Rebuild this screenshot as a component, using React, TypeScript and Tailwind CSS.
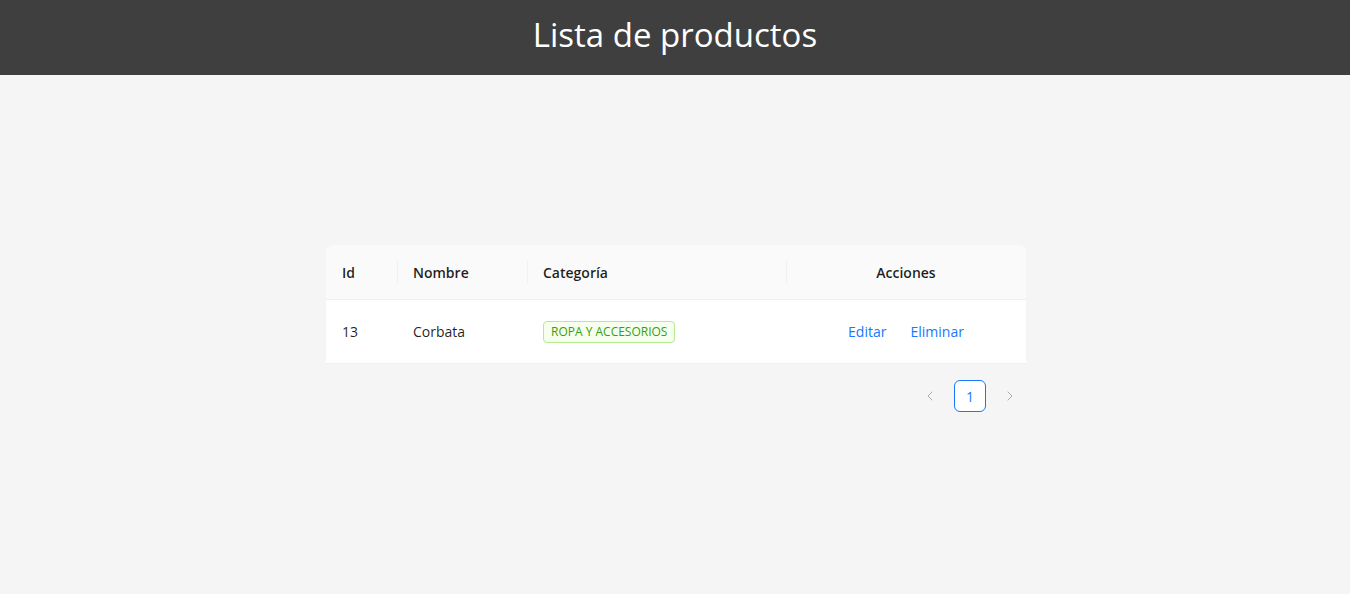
import { ChevronLeft, ChevronRight } from "lucide-react";

const font = { fontFamily: '"Open Sans", "Noto Sans", sans-serif' };

export default function App() {
  return (
    <div className="min-h-[594px] bg-[#f5f5f5] text-[14px] text-[rgba(0,0,0,0.88)]" style={font}>
      <header className="h-[75px] bg-[#3f3f3f] flex items-center justify-center">
        <h1 className="text-white text-[33px] leading-none pb-[6px]">Lista de productos</h1>
      </header>

      <main className="pt-[170px] flex justify-center pl-[2px]">
        <div className="w-[700px]">
          <table className="w-full border-separate border-spacing-0 bg-white rounded-t-lg table-fixed">
            <colgroup>
              <col className="w-[71px]" />
              <col className="w-[130px]" />
              <col className="w-[259px]" />
              <col className="w-[240px]" />
            </colgroup>
            <thead>
              <tr className="h-[55px]">
                <Th first>Id</Th>
                <Th sep>Nombre</Th>
                <Th sep>Categoría</Th>
                <Th sep center last>Acciones</Th>
              </tr>
            </thead>
            <tbody>
              <tr className="h-[64px]">
                <td className="px-4 border-b border-[#f0f0f0]">13</td>
                <td className="px-4 border-b border-[#f0f0f0]">Corbata</td>
                <td className="px-4 border-b border-[#f0f0f0]">
                  <span className="inline-flex items-center h-[22px] px-[7px] rounded border border-[#b7eb8f] bg-[#f6ffed] text-[#389e0d] text-[12px]">
                    ROPA Y ACCESORIOS
                  </span>
                </td>
                <td className="px-4 border-b border-[#f0f0f0]">
                  <div className="flex justify-center">
                    <button className="h-8 px-[12px] text-[#1677ff]">Editar</button>
                    <button className="h-8 px-[12px] text-[#1677ff]">Eliminar</button>
                  </div>
                </td>
              </tr>
            </tbody>
          </table>

          <div className="mt-4 flex justify-end gap-2">
            <span className="w-8 h-8 flex items-center justify-center text-[rgba(0,0,0,0.3)]">
              <ChevronLeft size={16} strokeWidth={1.5} />
            </span>
            <span className="w-8 h-8 flex items-center justify-center rounded-md border border-[#1677ff] bg-white text-[#1677ff] font-medium">
              1
            </span>
            <span className="w-8 h-8 flex items-center justify-center text-[rgba(0,0,0,0.3)]">
              <ChevronRight size={16} strokeWidth={1.5} />
            </span>
          </div>
        </div>
      </main>
    </div>
  );
}

function Th({
  children,
  sep,
  center,
  first,
  last,
}: {
  children: React.ReactNode;
  sep?: boolean;
  center?: boolean;
  first?: boolean;
  last?: boolean;
}) {
  return (
    <th
      className={
        "relative px-4 bg-[#fafafa] border-b border-[#f0f0f0] font-semibold " +
        (center ? "text-center " : "text-left ") +
        (first ? "rounded-tl-lg " : "") +
        (last ? "rounded-tr-lg " : "")
      }
    >
      {sep && <span className="absolute left-0 top-1/2 -translate-y-1/2 w-px h-[22px] bg-[#f0f0f0]" />}
      {children}
    </th>
  );
}
